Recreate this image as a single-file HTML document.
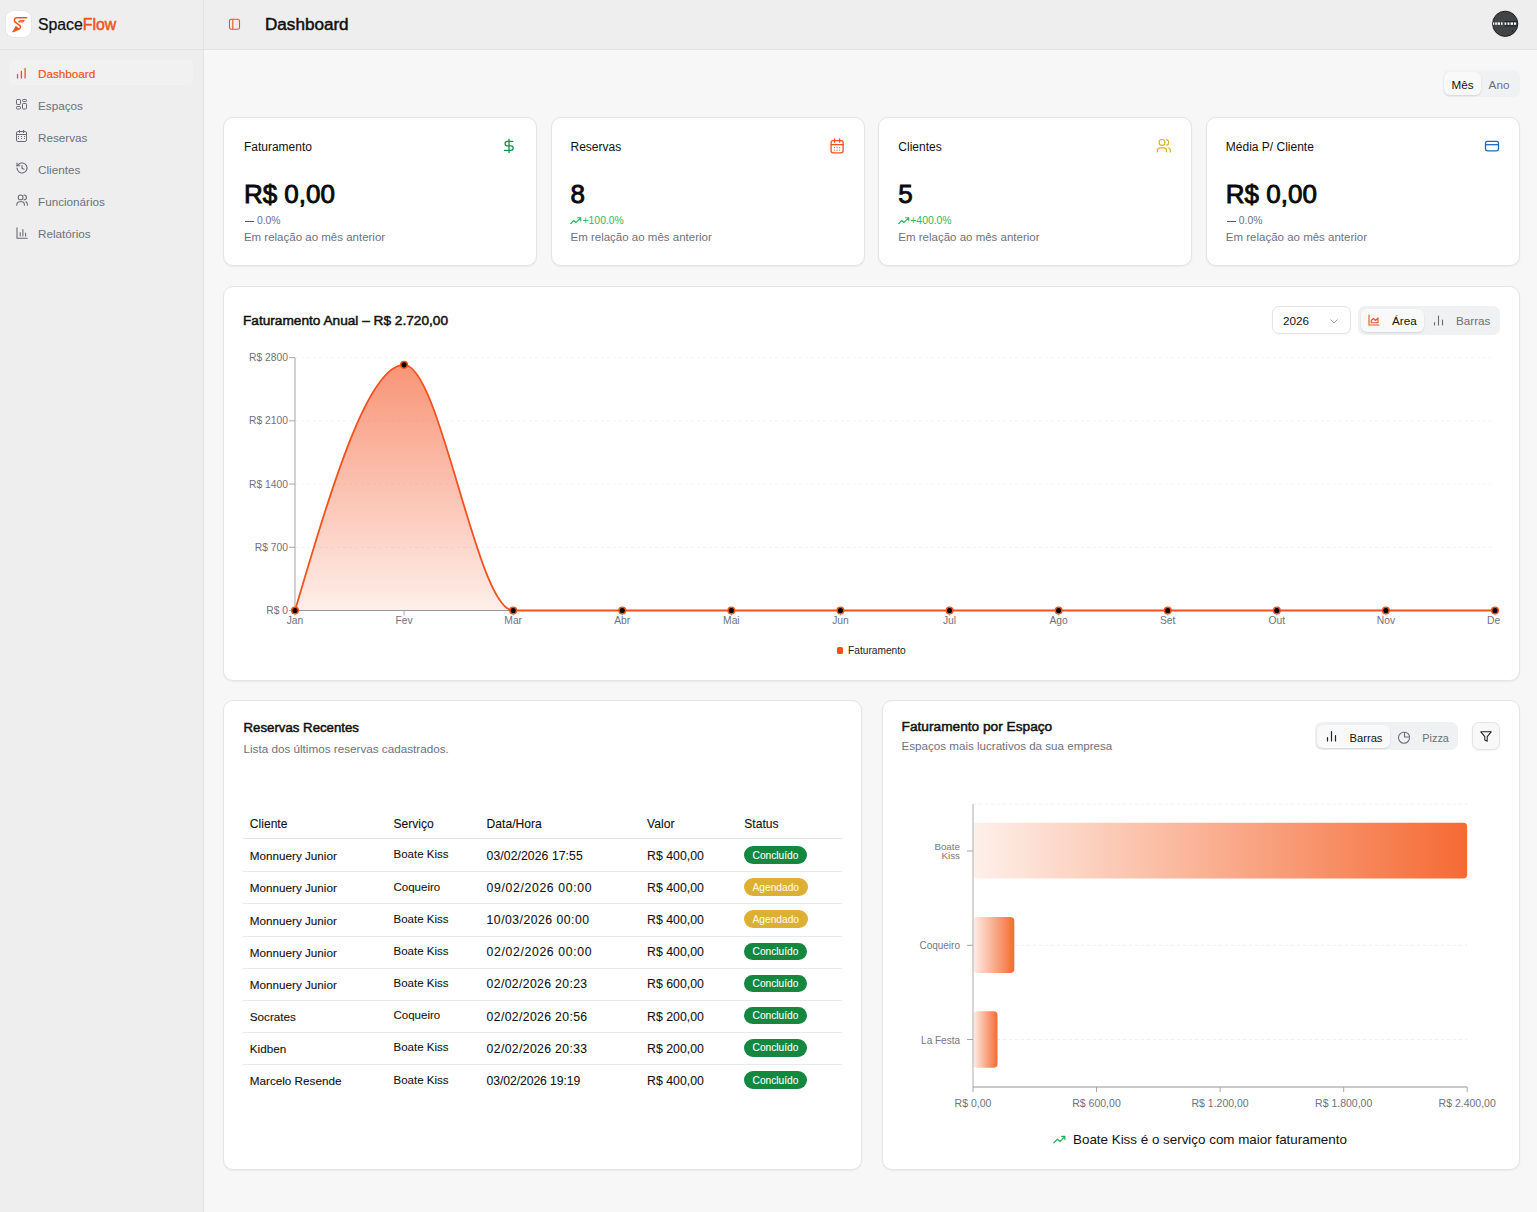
<!DOCTYPE html>
<html><head><meta charset="utf-8"><style>
html,body{margin:0;padding:0;width:1537px;height:1212px;overflow:hidden;background:#f7f7f7;}
body{position:relative;font-family:"Liberation Sans", sans-serif;}
.t{position:absolute;white-space:nowrap;}
svg{overflow:visible;}
</style></head><body>
<div style="position:absolute;left:0px;top:0px;width:203px;height:1212px;background:#eeeeee;"></div>
<div style="position:absolute;left:203px;top:0px;width:1px;height:1212px;background:#e3e3e3;"></div>
<div style="position:absolute;left:204px;top:0px;width:1333px;height:49px;background:#eeeeee;"></div>
<div style="position:absolute;left:0px;top:49px;width:1537px;height:1px;background:#e3e3e3;"></div>
<div style="position:absolute;left:204px;top:50px;width:1333px;height:1162px;background:#f7f7f7;"></div>
<div style="position:absolute;left:5.5px;top:11.2px;width:25.5px;height:25.5px;background:#fff;border-radius:8px;box-shadow:0 0 0 1px #e4e7eb;"></div>
<svg style="position:absolute;left:4px;top:9px;" width="28" height="29" viewBox="0 0 28 29"><g fill="none" stroke="#f4511e" stroke-width="1.5" stroke-linecap="round" stroke-linejoin="round"><path d="M22.6 8.8H12.6C10.2 8.8 9.6 12 11.6 13.4L15.6 16.3C17 17.4 16.6 19.2 15 20L9 22.6"/><path d="M14.6 12.6Q15 11.7 16.2 11.7H20.4L19.6 12.6Z" fill="#f4511e" stroke-width="1"/></g><path d="M8.4 23L11.8 16.8L15.2 19.6Z" fill="#f4511e"/></svg>
<div class="t" style="left:38px;top:16.63px;font-size:15.8px;line-height:15.8px;color:#111;font-weight:400;"><span style="-webkit-text-stroke:0.25px #111">Space</span><span style="color:#f4511e;-webkit-text-stroke:0.5px #f4511e">Flow</span></div>
<div style="position:absolute;left:9px;top:60px;width:184px;height:25px;background:#f1f1f1;border-radius:5px;"></div>
<div class="t" style="left:38px;top:68.10px;font-size:11.7px;line-height:11.7px;color:#f4511e;font-weight:400;-webkit-text-stroke:0.2px #f4511e;">Dashboard</div>
<div class="t" style="left:38px;top:100.10px;font-size:11.7px;line-height:11.7px;color:#6b7080;font-weight:400;">Espaços</div>
<div class="t" style="left:38px;top:132.10px;font-size:11.7px;line-height:11.7px;color:#6b7080;font-weight:400;">Reservas</div>
<div class="t" style="left:38px;top:164.10px;font-size:11.7px;line-height:11.7px;color:#6b7080;font-weight:400;">Clientes</div>
<div class="t" style="left:38px;top:196.10px;font-size:11.7px;line-height:11.7px;color:#6b7080;font-weight:400;">Funcionários</div>
<div class="t" style="left:38px;top:228.10px;font-size:11.7px;line-height:11.7px;color:#6b7080;font-weight:400;">Relatórios</div>
<svg style="position:absolute;left:15px;top:67.5px;" width="12" height="12" viewBox="0 0 12 12"><path d="M2.5 10V6.5M6.4 10V3.5M10.1 10V0.5" stroke="#f4511e" stroke-width="1.3" stroke-linecap="round" fill="none"/></svg>
<svg style="position:absolute;left:0px;top:0px;" width="40" height="260" viewBox="0 0 40 260"><g fill="none" stroke="#6b6b75" stroke-width="1"><rect x="16.5" y="99.5" width="4" height="5" rx="0.7"/><rect x="22.5" y="99.5" width="4" height="2" rx="0.7"/><rect x="22.5" y="103.5" width="4" height="5.5" rx="0.7"/><rect x="16.5" y="106.5" width="4" height="2.5" rx="0.7"/></g></svg>
<svg style="position:absolute;left:0px;top:0px;" width="40" height="260" viewBox="0 0 40 260"><g fill="none" stroke="#6b6b75" stroke-width="1"><rect x="16.5" y="131.5" width="10" height="10" rx="1.4"/><path d="M16.5 134.5H26.5M19.5 130V133M23.5 130V133"/></g><g fill="#6b6b75"><rect x="18" y="136" width="1" height="1"/><rect x="21" y="136" width="1" height="1"/><rect x="24" y="136" width="1" height="1"/><rect x="18" y="138" width="1" height="1"/><rect x="21" y="138" width="1" height="1"/><rect x="24" y="138" width="1" height="1"/></g></svg>
<svg style="position:absolute;left:15.5px;top:162.2px;" width="12" height="12" viewBox="0 0 12 12"><g fill="none" stroke="#6b6b75" stroke-width="1.1" stroke-linecap="round" stroke-linejoin="round"><path d="M1 6A5 5 0 1 0 2.6 2.3L1 3.8"/><path d="M1 1V3.8H3.8"/><path d="M6 3.5V6.2L8 7.2"/></g></svg>
<svg style="position:absolute;left:15.5px;top:194.4px;" width="12" height="12" viewBox="0 0 12 12"><g fill="none" stroke="#6b6b75" stroke-width="1.1" stroke-linecap="round"><circle cx="4.6" cy="3.4" r="2.4"/><path d="M0.8 11.2V10.5A2.8 2.8 0 0 1 3.6 7.7H5.6A2.8 2.8 0 0 1 8.4 10.5V11.2"/><path d="M8 1A2.4 2.4 0 0 1 8 5.8M9.9 7.8A2.8 2.8 0 0 1 11.4 10.5V11.2"/></g></svg>
<svg style="position:absolute;left:15.5px;top:226.5px;" width="12" height="12" viewBox="0 0 12 12"><g fill="none" stroke="#6b6b75" stroke-width="1.1" stroke-linecap="round"><path d="M1 0.8V11.2H11.2"/><path d="M4.2 9V5.5M6.9 9V2.5M9.6 9V6"/></g></svg>
<svg style="position:absolute;left:0px;top:0px;" width="260" height="49" viewBox="0 0 260 49"><g fill="none" stroke="#f4511e" stroke-width="1.1"><rect x="229.5" y="19.3" width="10" height="10" rx="1.8"/><path d="M232.8 19.3V29.3"/></g></svg>
<div class="t" style="left:265px;top:15.52px;font-size:17.1px;line-height:17.1px;color:#111;font-weight:400;-webkit-text-stroke:0.5px #111;">Dashboard</div>
<svg style="position:absolute;left:1490px;top:9px;" width="30" height="30" viewBox="0 0 30 30"><circle cx="15.2" cy="14.8" r="13.4" fill="none" stroke="#e3e4e8" stroke-width="1"/><circle cx="15.2" cy="14.8" r="12.6" fill="#404445" stroke="#16171c" stroke-width="0.9"/><g fill="#fff"><rect x="3" y="13.4" width="1.2" height="2.4"/><rect x="5.2" y="13.4" width="1.6" height="2.4"/><rect x="7.6" y="13.4" width="2.4" height="2.4"/><rect x="11" y="13.4" width="1.6" height="2.4"/><rect x="14.6" y="13.4" width="1.6" height="2.4"/><rect x="17.6" y="13.4" width="1.8" height="2.4"/><rect x="20.6" y="13.4" width="2.4" height="2.4"/><rect x="24" y="13.4" width="2" height="2.4"/></g><path d="M14.5 12.6H27.5M14.5 17H27.5" stroke="#15161a" stroke-width="0.8"/><circle cx="22.5" cy="22" r="0.7" fill="#15161a"/></svg>
<div style="position:absolute;left:1443px;top:70px;width:77px;height:27px;background:#f0f1f3;border-radius:7px;"></div>
<div style="position:absolute;left:1444px;top:72px;width:37px;height:23px;background:#f9f9fa;border-radius:6px;box-shadow:0 1px 2px rgba(0,0,0,.12);"></div>
<div class="t" style="left:1462.5px;transform:translateX(-50%);top:79.10px;font-size:11.7px;line-height:11.7px;color:#111;font-weight:400;">Mês</div>
<div class="t" style="left:1499px;transform:translateX(-50%);top:79.10px;font-size:11.7px;line-height:11.7px;color:#6b7080;font-weight:400;">Ano</div>
<div style="position:absolute;left:223px;top:117px;width:313.9px;height:149px;background:#fff;border-radius:10px;border:1px solid #e4e5e8;box-shadow:0 1px 2px rgba(0,0,0,.06);box-sizing:border-box;"></div>
<div class="t" style="left:243.9px;top:140.64px;font-size:12px;line-height:12px;color:#111;font-weight:400;">Faturamento</div>
<div class="t" style="left:243.9px;top:180.79px;font-size:26px;line-height:26px;color:#0a0a0a;font-weight:400;-webkit-text-stroke:0.9px #0a0a0a;">R$ 0,00</div>
<div style="position:absolute;left:244.9px;top:220.6px;width:9px;height:1.1px;background:#555a66;"></div>
<div class="t" style="left:256.9px;top:215.80px;font-size:10.4px;line-height:10.4px;color:#6e7280;font-weight:400;">0.0%</div>
<div class="t" style="left:243.9px;top:232.17px;font-size:11.5px;line-height:11.5px;color:#6e7280;font-weight:400;">Em relação ao mês anterior</div>
<div style="position:absolute;left:550.7px;top:117px;width:313.9px;height:149px;background:#fff;border-radius:10px;border:1px solid #e4e5e8;box-shadow:0 1px 2px rgba(0,0,0,.06);box-sizing:border-box;"></div>
<div class="t" style="left:570.5px;top:140.64px;font-size:12px;line-height:12px;color:#111;font-weight:400;">Reservas</div>
<div class="t" style="left:570.5px;top:180.79px;font-size:26px;line-height:26px;color:#0a0a0a;font-weight:400;-webkit-text-stroke:0.9px #0a0a0a;">8</div>
<svg style="position:absolute;left:570.0px;top:217.2px;" width="12" height="8" viewBox="0 0 12 8"><path d="M0.8 6.5L3.8 3.5L5.8 5.5L10.8 0.8M7.6 0.8H10.8V4" fill="none" stroke="#2bb964" stroke-width="1.1" stroke-linecap="round" stroke-linejoin="round"/></svg>
<div class="t" style="left:582.5px;top:215.80px;font-size:10.4px;line-height:10.4px;color:#2bb964;font-weight:400;">+100.0%</div>
<div class="t" style="left:570.5px;top:232.17px;font-size:11.5px;line-height:11.5px;color:#6e7280;font-weight:400;">Em relação ao mês anterior</div>
<div style="position:absolute;left:878.4px;top:117px;width:313.9px;height:149px;background:#fff;border-radius:10px;border:1px solid #e4e5e8;box-shadow:0 1px 2px rgba(0,0,0,.06);box-sizing:border-box;"></div>
<div class="t" style="left:898.3px;top:140.64px;font-size:12px;line-height:12px;color:#111;font-weight:400;">Clientes</div>
<div class="t" style="left:898.3px;top:180.79px;font-size:26px;line-height:26px;color:#0a0a0a;font-weight:400;-webkit-text-stroke:0.9px #0a0a0a;">5</div>
<svg style="position:absolute;left:897.8px;top:217.2px;" width="12" height="8" viewBox="0 0 12 8"><path d="M0.8 6.5L3.8 3.5L5.8 5.5L10.8 0.8M7.6 0.8H10.8V4" fill="none" stroke="#2bb964" stroke-width="1.1" stroke-linecap="round" stroke-linejoin="round"/></svg>
<div class="t" style="left:910.3px;top:215.80px;font-size:10.4px;line-height:10.4px;color:#2bb964;font-weight:400;">+400.0%</div>
<div class="t" style="left:898.3px;top:232.17px;font-size:11.5px;line-height:11.5px;color:#6e7280;font-weight:400;">Em relação ao mês anterior</div>
<div style="position:absolute;left:1206.1px;top:117px;width:313.9px;height:149px;background:#fff;border-radius:10px;border:1px solid #e4e5e8;box-shadow:0 1px 2px rgba(0,0,0,.06);box-sizing:border-box;"></div>
<div class="t" style="left:1225.8px;top:140.64px;font-size:12px;line-height:12px;color:#111;font-weight:400;">Média P/ Cliente</div>
<div class="t" style="left:1225.8px;top:180.79px;font-size:26px;line-height:26px;color:#0a0a0a;font-weight:400;-webkit-text-stroke:0.9px #0a0a0a;">R$ 0,00</div>
<div style="position:absolute;left:1226.8px;top:220.6px;width:9px;height:1.1px;background:#555a66;"></div>
<div class="t" style="left:1238.8px;top:215.80px;font-size:10.4px;line-height:10.4px;color:#6e7280;font-weight:400;">0.0%</div>
<div class="t" style="left:1225.8px;top:232.17px;font-size:11.5px;line-height:11.5px;color:#6e7280;font-weight:400;">Em relação ao mês anterior</div>
<svg style="position:absolute;left:0;top:0" width="1537" height="300" viewBox="0 0 1537 300"><path d="M509 139.2V152.6M512.6 141.4H507.3A2.2 2.2 0 0 0 507.3 145.8H510.9A2.3 2.3 0 0 1 510.9 150.4H504.6" fill="none" stroke="#17924a" stroke-width="1.35" stroke-linecap="round"/><g fill="none" stroke="#f4511e" stroke-width="1.3" stroke-linecap="round"><rect x="831.1" y="140.6" width="12" height="12.2" rx="2"/><path d="M831.1 144.6H843.1M834.6 139V142.2M839.6 139V142.2"/></g><g fill="#f4511e"><circle cx="834.5" cy="147.6" r=".6"/><circle cx="837.1" cy="147.6" r=".6"/><circle cx="839.7" cy="147.6" r=".6"/><circle cx="834.5" cy="150.1" r=".6"/><circle cx="837.1" cy="150.1" r=".6"/><circle cx="839.7" cy="150.1" r=".6"/></g><g fill="none" stroke="#dcae2c" stroke-width="1.2" stroke-linecap="round"><circle cx="1162" cy="142.4" r="2.9"/><path d="M1157.3 152V150.8A3 3 0 0 1 1160.3 147.8H1163.6A3 3 0 0 1 1166.6 150.8V152"/><path d="M1166.6 139.6A2.9 2.9 0 0 1 1166.6 145.2M1168.8 147.9A3 3 0 0 1 1170.4 150.8V152"/></g><g fill="none" stroke="#1a6bc0" stroke-width="1.3"><rect x="1485.5" y="141.4" width="13" height="9.4" rx="1.8"/><path d="M1485.5 144.7H1498.5"/></g></svg>
<div style="position:absolute;left:223px;top:286px;width:1297px;height:395px;background:#fff;border-radius:10px;border:1px solid #e4e5e8;box-shadow:0 1px 2px rgba(0,0,0,.06);box-sizing:border-box;"></div>
<div class="t" style="left:243px;top:313.84px;font-size:13.66px;line-height:13.66px;color:#111;font-weight:400;-webkit-text-stroke:0.5px #111;">Faturamento Anual – R$ 2.720,00</div>
<div style="position:absolute;left:1272px;top:306px;width:79px;height:28px;background:#fff;border:1px solid #e3e4e8;border-radius:7px;box-sizing:border-box;box-shadow:0 1px 2px rgba(0,0,0,.04);"></div>
<div class="t" style="left:1283px;top:315.10px;font-size:11.7px;line-height:11.7px;color:#111;font-weight:400;">2026</div>
<svg style="position:absolute;left:1330px;top:318.5px;" width="8" height="5" viewBox="0 0 8 5"><path d="M0.5 0.5L4 4L7.5 0.5" fill="none" stroke="#9a9ca3" stroke-width="1"/></svg>
<div style="position:absolute;left:1358px;top:306px;width:142px;height:29px;background:#f0f1f3;border-radius:7px;"></div>
<div style="position:absolute;left:1361px;top:309px;width:63px;height:23px;background:#f9f9fa;border-radius:6px;box-shadow:0 1px 2px rgba(0,0,0,.12);"></div>
<svg style="position:absolute;left:1368px;top:314px;" width="12" height="12" viewBox="0 0 12 12"><g fill="none" stroke="#f4511e" stroke-width="1.1" stroke-linecap="round" stroke-linejoin="round"><path d="M1 1V11H11"/><path d="M3.2 8.8V6.5L5.5 4.5L7.5 6.5L10 4V8.8Z"/></g></svg>
<div class="t" style="left:1392px;top:315.10px;font-size:11.7px;line-height:11.7px;color:#111;font-weight:400;">Área</div>
<svg style="position:absolute;left:1433px;top:314px;" width="11" height="12" viewBox="0 0 11 12"><g fill="none" stroke="#6b6b75" stroke-width="1.1" stroke-linecap="round"><path d="M1.5 11V8.5M5.5 11V2M9.5 11V6"/></g></svg>
<div class="t" style="left:1456px;top:315.10px;font-size:11.7px;line-height:11.7px;color:#6b7080;font-weight:400;">Barras</div>
<svg style="position:absolute;left:0;top:0;" width="1500" height="700" viewBox="0 0 1500 700"><line x1="295" y1="357.60" x2="1493" y2="357.60" stroke="#f0f0f2" stroke-width="0.8" stroke-dasharray="3 3"/><line x1="295" y1="420.83" x2="1493" y2="420.83" stroke="#f0f0f2" stroke-width="0.8" stroke-dasharray="3 3"/><line x1="295" y1="484.05" x2="1493" y2="484.05" stroke="#f0f0f2" stroke-width="0.8" stroke-dasharray="3 3"/><line x1="295" y1="547.27" x2="1493" y2="547.27" stroke="#f0f0f2" stroke-width="0.8" stroke-dasharray="3 3"/><line x1="295" y1="610.50" x2="1493" y2="610.50" stroke="#f0f0f2" stroke-width="0.8" stroke-dasharray="3 3"/><defs><linearGradient id="ag" x1="0" y1="0" x2="0" y2="1"><stop offset="0%" stop-color="#f5592a" stop-opacity="0.64"/><stop offset="100%" stop-color="#f5592a" stop-opacity="0.1"/></linearGradient><linearGradient id="bg1" x1="0" y1="0" x2="1" y2="0"><stop offset="0%" stop-color="#f4511e" stop-opacity="0.08"/><stop offset="100%" stop-color="#f4511e" stop-opacity="0.85"/></linearGradient><clipPath id="cc"><rect x="0" y="0" width="1500" height="700"/></clipPath></defs><path d="M295.00,610.50 C331.36,487.66 367.73,364.83 404.09,364.83 C440.45,364.83 476.82,610.50 513.18,610.50 C549.55,610.50 585.91,610.50 622.27,610.50 C658.64,610.50 695.00,610.50 731.36,610.50 C767.73,610.50 804.09,610.50 840.45,610.50 C876.82,610.50 913.18,610.50 949.55,610.50 C985.91,610.50 1022.27,610.50 1058.64,610.50 C1095.00,610.50 1131.36,610.50 1167.73,610.50 C1204.09,610.50 1240.45,610.50 1276.82,610.50 C1313.18,610.50 1349.55,610.50 1385.91,610.50 C1422.27,610.50 1458.64,610.50 1495.00,610.50 L1495,610.5 L295,610.5 Z" fill="url(#ag)" stroke="none"/><line x1="295" y1="357.6" x2="295" y2="610.5" stroke="#b4b5ba" stroke-width="1.2"/><line x1="295" y1="610.5" x2="1495" y2="610.5" stroke="#98989c" stroke-width="1.1"/><line x1="289" y1="357.60" x2="295" y2="357.60" stroke="#a8a8ac" stroke-width="1"/><line x1="289" y1="420.83" x2="295" y2="420.83" stroke="#a8a8ac" stroke-width="1"/><line x1="289" y1="484.05" x2="295" y2="484.05" stroke="#a8a8ac" stroke-width="1"/><line x1="289" y1="547.27" x2="295" y2="547.27" stroke="#a8a8ac" stroke-width="1"/><line x1="289" y1="610.50" x2="295" y2="610.50" stroke="#a8a8ac" stroke-width="1"/><line x1="295.00" y1="610.5" x2="295.00" y2="615.5" stroke="#a8a8ac" stroke-width="1"/><line x1="404.09" y1="610.5" x2="404.09" y2="615.5" stroke="#a8a8ac" stroke-width="1"/><line x1="513.18" y1="610.5" x2="513.18" y2="615.5" stroke="#a8a8ac" stroke-width="1"/><line x1="622.27" y1="610.5" x2="622.27" y2="615.5" stroke="#a8a8ac" stroke-width="1"/><line x1="731.36" y1="610.5" x2="731.36" y2="615.5" stroke="#a8a8ac" stroke-width="1"/><line x1="840.45" y1="610.5" x2="840.45" y2="615.5" stroke="#a8a8ac" stroke-width="1"/><line x1="949.55" y1="610.5" x2="949.55" y2="615.5" stroke="#a8a8ac" stroke-width="1"/><line x1="1058.64" y1="610.5" x2="1058.64" y2="615.5" stroke="#a8a8ac" stroke-width="1"/><line x1="1167.73" y1="610.5" x2="1167.73" y2="615.5" stroke="#a8a8ac" stroke-width="1"/><line x1="1276.82" y1="610.5" x2="1276.82" y2="615.5" stroke="#a8a8ac" stroke-width="1"/><line x1="1385.91" y1="610.5" x2="1385.91" y2="615.5" stroke="#a8a8ac" stroke-width="1"/><line x1="1495.00" y1="610.5" x2="1495.00" y2="615.5" stroke="#a8a8ac" stroke-width="1"/><path d="M295.00,610.50 C331.36,487.66 367.73,364.83 404.09,364.83 C440.45,364.83 476.82,610.50 513.18,610.50 C549.55,610.50 585.91,610.50 622.27,610.50 C658.64,610.50 695.00,610.50 731.36,610.50 C767.73,610.50 804.09,610.50 840.45,610.50 C876.82,610.50 913.18,610.50 949.55,610.50 C985.91,610.50 1022.27,610.50 1058.64,610.50 C1095.00,610.50 1131.36,610.50 1167.73,610.50 C1204.09,610.50 1240.45,610.50 1276.82,610.50 C1313.18,610.50 1349.55,610.50 1385.91,610.50 C1422.27,610.50 1458.64,610.50 1495.00,610.50" fill="none" stroke="#f4511e" stroke-width="1.8"/><circle cx="295.00" cy="610.50" r="3.3" fill="#000" stroke="#f4511e" stroke-width="1.5"/><circle cx="404.09" cy="364.83" r="3.3" fill="#000" stroke="#f4511e" stroke-width="1.5"/><circle cx="513.18" cy="610.50" r="3.3" fill="#000" stroke="#f4511e" stroke-width="1.5"/><circle cx="622.27" cy="610.50" r="3.3" fill="#000" stroke="#f4511e" stroke-width="1.5"/><circle cx="731.36" cy="610.50" r="3.3" fill="#000" stroke="#f4511e" stroke-width="1.5"/><circle cx="840.45" cy="610.50" r="3.3" fill="#000" stroke="#f4511e" stroke-width="1.5"/><circle cx="949.55" cy="610.50" r="3.3" fill="#000" stroke="#f4511e" stroke-width="1.5"/><circle cx="1058.64" cy="610.50" r="3.3" fill="#000" stroke="#f4511e" stroke-width="1.5"/><circle cx="1167.73" cy="610.50" r="3.3" fill="#000" stroke="#f4511e" stroke-width="1.5"/><circle cx="1276.82" cy="610.50" r="3.3" fill="#000" stroke="#f4511e" stroke-width="1.5"/><circle cx="1385.91" cy="610.50" r="3.3" fill="#000" stroke="#f4511e" stroke-width="1.5"/><circle cx="1495.00" cy="610.50" r="3.3" fill="#000" stroke="#f4511e" stroke-width="1.5"/></svg>
<div class="t" style="right:1249px;top:353.18px;font-size:10.3px;line-height:10.3px;color:#6e7280;font-weight:400;">R$ 2800</div>
<div class="t" style="right:1249px;top:416.41px;font-size:10.3px;line-height:10.3px;color:#6e7280;font-weight:400;">R$ 2100</div>
<div class="t" style="right:1249px;top:479.63px;font-size:10.3px;line-height:10.3px;color:#6e7280;font-weight:400;">R$ 1400</div>
<div class="t" style="right:1249px;top:542.86px;font-size:10.3px;line-height:10.3px;color:#6e7280;font-weight:400;">R$ 700</div>
<div class="t" style="right:1249px;top:606.08px;font-size:10.3px;line-height:10.3px;color:#6e7280;font-weight:400;">R$ 0</div>
<div class="t" style="left:295.0px;transform:translateX(-50%);top:616.08px;font-size:10.3px;line-height:10.3px;color:#6e7280;font-weight:400;">Jan</div>
<div class="t" style="left:404.09px;transform:translateX(-50%);top:616.08px;font-size:10.3px;line-height:10.3px;color:#6e7280;font-weight:400;">Fev</div>
<div class="t" style="left:513.18px;transform:translateX(-50%);top:616.08px;font-size:10.3px;line-height:10.3px;color:#6e7280;font-weight:400;">Mar</div>
<div class="t" style="left:622.27px;transform:translateX(-50%);top:616.08px;font-size:10.3px;line-height:10.3px;color:#6e7280;font-weight:400;">Abr</div>
<div class="t" style="left:731.36px;transform:translateX(-50%);top:616.08px;font-size:10.3px;line-height:10.3px;color:#6e7280;font-weight:400;">Mai</div>
<div class="t" style="left:840.45px;transform:translateX(-50%);top:616.08px;font-size:10.3px;line-height:10.3px;color:#6e7280;font-weight:400;">Jun</div>
<div class="t" style="left:949.55px;transform:translateX(-50%);top:616.08px;font-size:10.3px;line-height:10.3px;color:#6e7280;font-weight:400;">Jul</div>
<div class="t" style="left:1058.64px;transform:translateX(-50%);top:616.08px;font-size:10.3px;line-height:10.3px;color:#6e7280;font-weight:400;">Ago</div>
<div class="t" style="left:1167.73px;transform:translateX(-50%);top:616.08px;font-size:10.3px;line-height:10.3px;color:#6e7280;font-weight:400;">Set</div>
<div class="t" style="left:1276.82px;transform:translateX(-50%);top:616.08px;font-size:10.3px;line-height:10.3px;color:#6e7280;font-weight:400;">Out</div>
<div class="t" style="left:1385.91px;transform:translateX(-50%);top:616.08px;font-size:10.3px;line-height:10.3px;color:#6e7280;font-weight:400;">Nov</div>
<div class="t" style="left:1487px;top:616.08px;font-size:10.3px;line-height:10.3px;color:#6e7280;font-weight:400;">De</div>
<div style="position:absolute;left:837px;top:647px;width:6px;height:7px;background:#f4511e;border-radius:1.5px;"></div>
<div class="t" style="left:848px;top:646.17px;font-size:10.2px;line-height:10.2px;color:#222;font-weight:400;">Faturamento</div>
<div style="position:absolute;left:223px;top:700px;width:639px;height:470px;background:#fff;border-radius:10px;border:1px solid #e4e5e8;box-shadow:0 1px 2px rgba(0,0,0,.06);box-sizing:border-box;"></div>
<div class="t" style="left:243.5px;top:720.99px;font-size:13.24px;line-height:13.24px;color:#111;font-weight:400;-webkit-text-stroke:0.5px #111;">Reservas Recentes</div>
<div class="t" style="left:243.5px;top:742.60px;font-size:11.7px;line-height:11.7px;color:#6e7280;font-weight:400;">Lista dos últimos reservas cadastrados.</div>
<div class="t" style="left:249.8px;top:818.16px;font-size:12.1px;line-height:12.1px;color:#111;font-weight:400;-webkit-text-stroke:0.1px #111;">Cliente</div>
<div class="t" style="left:393.5px;top:818.16px;font-size:12.1px;line-height:12.1px;color:#111;font-weight:400;-webkit-text-stroke:0.1px #111;">Serviço</div>
<div class="t" style="left:486.6px;top:818.16px;font-size:12.1px;line-height:12.1px;color:#111;font-weight:400;-webkit-text-stroke:0.1px #111;">Data/Hora</div>
<div class="t" style="left:647.1px;top:818.16px;font-size:12.1px;line-height:12.1px;color:#111;font-weight:400;-webkit-text-stroke:0.1px #111;">Valor</div>
<div class="t" style="left:744.3px;top:818.16px;font-size:12.1px;line-height:12.1px;color:#111;font-weight:400;-webkit-text-stroke:0.1px #111;">Status</div>
<div style="position:absolute;left:243px;top:838px;width:599px;height:1px;background:#e6e6e9;"></div>
<div class="t" style="left:249.8px;top:850.30px;font-size:11.7px;line-height:11.7px;color:#111;font-weight:400;-webkit-text-stroke:0.1px #111;">Monnuery Junior</div>
<div class="t" style="left:393.5px;top:849.47px;font-size:11.5px;line-height:11.5px;color:#111;font-weight:400;-webkit-text-stroke:0.08px #111;">Boate Kiss</div>
<div class="t" style="left:486.6px;top:849.87px;font-size:12.2px;line-height:12.2px;color:#111;font-weight:400;letter-spacing:0.082px;-webkit-text-stroke:0.08px #111;">03/02/2026 17:55</div>
<div class="t" style="left:647.1px;top:849.79px;font-size:12.3px;line-height:12.3px;color:#111;font-weight:400;-webkit-text-stroke:0.08px #111;">R$ 400,00</div>
<div style="position:absolute;left:743.9px;top:846.1px;width:63.3px;height:17.6px;background:#15883f;border-radius:9px;"></div>
<div class="t" style="left:775.5px;transform:translateX(-50%);top:850.57px;font-size:10.2px;line-height:10.2px;color:#fff;font-weight:400;-webkit-text-stroke:0.08px #fff;">Concluído</div>
<div style="position:absolute;left:243px;top:871.3px;width:599px;height:1px;background:#e9e9ec;"></div>
<div class="t" style="left:249.8px;top:882.45px;font-size:11.7px;line-height:11.7px;color:#111;font-weight:400;-webkit-text-stroke:0.1px #111;">Monnuery Junior</div>
<div class="t" style="left:393.5px;top:881.62px;font-size:11.5px;line-height:11.5px;color:#111;font-weight:400;-webkit-text-stroke:0.08px #111;">Coqueiro</div>
<div class="t" style="left:486.6px;top:882.02px;font-size:12.2px;line-height:12.2px;color:#111;font-weight:400;letter-spacing:0.669px;-webkit-text-stroke:0.08px #111;">09/02/2026 00:00</div>
<div class="t" style="left:647.1px;top:881.94px;font-size:12.3px;line-height:12.3px;color:#111;font-weight:400;-webkit-text-stroke:0.08px #111;">R$ 400,00</div>
<div style="position:absolute;left:743.9px;top:878.25px;width:63.8px;height:17.6px;background:#ddb033;border-radius:9px;"></div>
<div class="t" style="left:775.8px;transform:translateX(-50%);top:882.72px;font-size:10.2px;line-height:10.2px;color:#fff8e6;font-weight:400;-webkit-text-stroke:0.08px #fff8e6;">Agendado</div>
<div style="position:absolute;left:243px;top:903.4499999999999px;width:599px;height:1px;background:#e9e9ec;"></div>
<div class="t" style="left:249.8px;top:914.60px;font-size:11.7px;line-height:11.7px;color:#111;font-weight:400;-webkit-text-stroke:0.1px #111;">Monnuery Junior</div>
<div class="t" style="left:393.5px;top:913.77px;font-size:11.5px;line-height:11.5px;color:#111;font-weight:400;-webkit-text-stroke:0.08px #111;">Boate Kiss</div>
<div class="t" style="left:486.6px;top:914.17px;font-size:12.2px;line-height:12.2px;color:#111;font-weight:400;letter-spacing:0.502px;-webkit-text-stroke:0.08px #111;">10/03/2026 00:00</div>
<div class="t" style="left:647.1px;top:914.09px;font-size:12.3px;line-height:12.3px;color:#111;font-weight:400;-webkit-text-stroke:0.08px #111;">R$ 400,00</div>
<div style="position:absolute;left:743.9px;top:910.4px;width:63.8px;height:17.6px;background:#ddb033;border-radius:9px;"></div>
<div class="t" style="left:775.8px;transform:translateX(-50%);top:914.87px;font-size:10.2px;line-height:10.2px;color:#fff8e6;font-weight:400;-webkit-text-stroke:0.08px #fff8e6;">Agendado</div>
<div style="position:absolute;left:243px;top:935.5999999999999px;width:599px;height:1px;background:#e9e9ec;"></div>
<div class="t" style="left:249.8px;top:946.75px;font-size:11.7px;line-height:11.7px;color:#111;font-weight:400;-webkit-text-stroke:0.1px #111;">Monnuery Junior</div>
<div class="t" style="left:393.5px;top:945.92px;font-size:11.5px;line-height:11.5px;color:#111;font-weight:400;-webkit-text-stroke:0.08px #111;">Boate Kiss</div>
<div class="t" style="left:486.6px;top:946.32px;font-size:12.2px;line-height:12.2px;color:#111;font-weight:400;letter-spacing:0.669px;-webkit-text-stroke:0.08px #111;">02/02/2026 00:00</div>
<div class="t" style="left:647.1px;top:946.24px;font-size:12.3px;line-height:12.3px;color:#111;font-weight:400;-webkit-text-stroke:0.08px #111;">R$ 400,00</div>
<div style="position:absolute;left:743.9px;top:942.55px;width:63.3px;height:17.6px;background:#15883f;border-radius:9px;"></div>
<div class="t" style="left:775.5px;transform:translateX(-50%);top:947.02px;font-size:10.2px;line-height:10.2px;color:#fff;font-weight:400;-webkit-text-stroke:0.08px #fff;">Concluído</div>
<div style="position:absolute;left:243px;top:967.75px;width:599px;height:1px;background:#e9e9ec;"></div>
<div class="t" style="left:249.8px;top:978.90px;font-size:11.7px;line-height:11.7px;color:#111;font-weight:400;-webkit-text-stroke:0.1px #111;">Monnuery Junior</div>
<div class="t" style="left:393.5px;top:978.07px;font-size:11.5px;line-height:11.5px;color:#111;font-weight:400;-webkit-text-stroke:0.08px #111;">Boate Kiss</div>
<div class="t" style="left:486.6px;top:978.47px;font-size:12.2px;line-height:12.2px;color:#111;font-weight:400;letter-spacing:0.376px;-webkit-text-stroke:0.08px #111;">02/02/2026 20:23</div>
<div class="t" style="left:647.1px;top:978.39px;font-size:12.3px;line-height:12.3px;color:#111;font-weight:400;-webkit-text-stroke:0.08px #111;">R$ 600,00</div>
<div style="position:absolute;left:743.9px;top:974.7px;width:63.3px;height:17.6px;background:#15883f;border-radius:9px;"></div>
<div class="t" style="left:775.5px;transform:translateX(-50%);top:979.17px;font-size:10.2px;line-height:10.2px;color:#fff;font-weight:400;-webkit-text-stroke:0.08px #fff;">Concluído</div>
<div style="position:absolute;left:243px;top:999.9px;width:599px;height:1px;background:#e9e9ec;"></div>
<div class="t" style="left:249.8px;top:1011.05px;font-size:11.7px;line-height:11.7px;color:#111;font-weight:400;-webkit-text-stroke:0.1px #111;">Socrates</div>
<div class="t" style="left:393.5px;top:1010.22px;font-size:11.5px;line-height:11.5px;color:#111;font-weight:400;-webkit-text-stroke:0.08px #111;">Coqueiro</div>
<div class="t" style="left:486.6px;top:1010.62px;font-size:12.2px;line-height:12.2px;color:#111;font-weight:400;letter-spacing:0.376px;-webkit-text-stroke:0.08px #111;">02/02/2026 20:56</div>
<div class="t" style="left:647.1px;top:1010.54px;font-size:12.3px;line-height:12.3px;color:#111;font-weight:400;-webkit-text-stroke:0.08px #111;">R$ 200,00</div>
<div style="position:absolute;left:743.9px;top:1006.85px;width:63.3px;height:17.6px;background:#15883f;border-radius:9px;"></div>
<div class="t" style="left:775.5px;transform:translateX(-50%);top:1011.32px;font-size:10.2px;line-height:10.2px;color:#fff;font-weight:400;-webkit-text-stroke:0.08px #fff;">Concluído</div>
<div style="position:absolute;left:243px;top:1032.05px;width:599px;height:1px;background:#e9e9ec;"></div>
<div class="t" style="left:249.8px;top:1043.20px;font-size:11.7px;line-height:11.7px;color:#111;font-weight:400;-webkit-text-stroke:0.1px #111;">Kidben</div>
<div class="t" style="left:393.5px;top:1042.37px;font-size:11.5px;line-height:11.5px;color:#111;font-weight:400;-webkit-text-stroke:0.08px #111;">Boate Kiss</div>
<div class="t" style="left:486.6px;top:1042.77px;font-size:12.2px;line-height:12.2px;color:#111;font-weight:400;letter-spacing:0.376px;-webkit-text-stroke:0.08px #111;">02/02/2026 20:33</div>
<div class="t" style="left:647.1px;top:1042.69px;font-size:12.3px;line-height:12.3px;color:#111;font-weight:400;-webkit-text-stroke:0.08px #111;">R$ 200,00</div>
<div style="position:absolute;left:743.9px;top:1039.0px;width:63.3px;height:17.6px;background:#15883f;border-radius:9px;"></div>
<div class="t" style="left:775.5px;transform:translateX(-50%);top:1043.47px;font-size:10.2px;line-height:10.2px;color:#fff;font-weight:400;-webkit-text-stroke:0.08px #fff;">Concluído</div>
<div style="position:absolute;left:243px;top:1064.1999999999998px;width:599px;height:1px;background:#e9e9ec;"></div>
<div class="t" style="left:249.8px;top:1075.35px;font-size:11.7px;line-height:11.7px;color:#111;font-weight:400;-webkit-text-stroke:0.1px #111;">Marcelo Resende</div>
<div class="t" style="left:393.5px;top:1074.52px;font-size:11.5px;line-height:11.5px;color:#111;font-weight:400;-webkit-text-stroke:0.08px #111;">Boate Kiss</div>
<div class="t" style="left:486.6px;top:1074.92px;font-size:12.2px;line-height:12.2px;color:#111;font-weight:400;letter-spacing:-0.078px;-webkit-text-stroke:0.08px #111;">03/02/2026 19:19</div>
<div class="t" style="left:647.1px;top:1074.84px;font-size:12.3px;line-height:12.3px;color:#111;font-weight:400;-webkit-text-stroke:0.08px #111;">R$ 400,00</div>
<div style="position:absolute;left:743.9px;top:1071.15px;width:63.3px;height:17.6px;background:#15883f;border-radius:9px;"></div>
<div class="t" style="left:775.5px;transform:translateX(-50%);top:1075.62px;font-size:10.2px;line-height:10.2px;color:#fff;font-weight:400;-webkit-text-stroke:0.08px #fff;">Concluído</div>
<div style="position:absolute;left:881.5px;top:700px;width:638.5px;height:470px;background:#fff;border-radius:10px;border:1px solid #e4e5e8;box-shadow:0 1px 2px rgba(0,0,0,.06);box-sizing:border-box;"></div>
<div class="t" style="left:901.6px;top:720.30px;font-size:13.7px;line-height:13.7px;color:#111;font-weight:400;-webkit-text-stroke:0.5px #111;">Faturamento por Espaço</div>
<div class="t" style="left:901.6px;top:739.98px;font-size:11.6px;line-height:11.6px;color:#6e7280;font-weight:400;">Espaços mais lucrativos da sua empresa</div>
<div style="position:absolute;left:1315.3px;top:722.2px;width:142.5px;height:28.3px;background:#f0f1f3;border-radius:7px;"></div>
<div style="position:absolute;left:1317px;top:725px;width:72.9px;height:23.2px;background:#f9f9fa;border-radius:6px;box-shadow:0 1px 2px rgba(0,0,0,.12);"></div>
<svg style="position:absolute;left:1326px;top:730px;" width="11" height="12" viewBox="0 0 11 12"><g fill="none" stroke="#222" stroke-width="1.2" stroke-linecap="round"><path d="M1.5 11V7.5M5.5 11V1.5M9.5 11V5.5"/></g></svg>
<div class="t" style="left:1349.5px;top:732.72px;font-size:11.2px;line-height:11.2px;color:#111;font-weight:400;">Barras</div>
<svg style="position:absolute;left:1398px;top:730.5px;" width="13" height="13" viewBox="0 0 13 13"><g fill="none" stroke="#6b6b75" stroke-width="1.1" stroke-linecap="round" stroke-linejoin="round"><path d="M11.5 7A5.5 5.5 0 1 1 5.5 1.3"/><path d="M6.5 1.2A5 5 0 0 1 11.6 6H6.5Z"/></g></svg>
<div class="t" style="left:1422.3px;top:732.97px;font-size:10.9px;line-height:10.9px;color:#6b7080;font-weight:400;">Pizza</div>
<div style="position:absolute;left:1471.5px;top:722.2px;width:28px;height:28.3px;background:#f8f8f9;border:1px solid #e3e4e8;border-radius:7px;box-sizing:border-box;box-shadow:0 1px 2px rgba(0,0,0,.06);"></div>
<svg style="position:absolute;left:1479.5px;top:731px;" width="12" height="11" viewBox="0 0 12 11"><path d="M0.8 0.8H11.2L7.2 5.6V10.2L4.8 9V5.6Z" fill="none" stroke="#222" stroke-width="1.05" stroke-linejoin="round"/></svg>
<svg style="position:absolute;left:0;top:0;" width="1537" height="1212" viewBox="0 0 1537 1212"><defs><linearGradient id="hb" x1="0" y1="0" x2="1" y2="0"><stop offset="0%" stop-color="#fef0ea"/><stop offset="100%" stop-color="#f56a33"/></linearGradient></defs><line x1="973" y1="804.2" x2="1467.2" y2="804.2" stroke="#efeff2" stroke-dasharray="3 3"/><line x1="973" y1="851" x2="1467.2" y2="851" stroke="#efeff2" stroke-dasharray="3 3"/><line x1="973" y1="945.3" x2="1467.2" y2="945.3" stroke="#efeff2" stroke-dasharray="3 3"/><line x1="973" y1="1039.5" x2="1467.2" y2="1039.5" stroke="#efeff2" stroke-dasharray="3 3"/><rect x="973" y="822.7" width="494.2" height="55.8" rx="4" fill="url(#hb)"/><rect x="973" y="917.1" width="41.3" height="55.9" rx="4" fill="url(#hb)"/><rect x="973" y="1011.3" width="24.5" height="56.4" rx="4" fill="url(#hb)"/><line x1="973" y1="804.2" x2="973" y2="1087" stroke="#b9babe" stroke-width="1.2"/><line x1="973" y1="1087" x2="1467.2" y2="1087" stroke="#939397" stroke-width="1.1"/><line x1="967" y1="851" x2="973" y2="851" stroke="#a8a8ac"/><line x1="967" y1="945.3" x2="973" y2="945.3" stroke="#a8a8ac"/><line x1="967" y1="1039.5" x2="973" y2="1039.5" stroke="#a8a8ac"/><line x1="973.0" y1="1087" x2="973.0" y2="1092" stroke="#a8a8ac"/><line x1="1096.5" y1="1087" x2="1096.5" y2="1092" stroke="#a8a8ac"/><line x1="1220.1" y1="1087" x2="1220.1" y2="1092" stroke="#a8a8ac"/><line x1="1343.7" y1="1087" x2="1343.7" y2="1092" stroke="#a8a8ac"/><line x1="1467.2" y1="1087" x2="1467.2" y2="1092" stroke="#a8a8ac"/></svg>
<div class="t" style="right:577px;top:842.10px;font-size:9.8px;line-height:9.8px;color:#737784;font-weight:400;">Boate</div>
<div class="t" style="right:577px;top:851.10px;font-size:9.8px;line-height:9.8px;color:#737784;font-weight:400;">Kiss</div>
<div class="t" style="right:577px;top:941.33px;font-size:10px;line-height:10px;color:#737784;font-weight:400;">Coqueiro</div>
<div class="t" style="right:577px;top:1035.84px;font-size:10px;line-height:10px;color:#737784;font-weight:400;">La Festa</div>
<div class="t" style="left:973.0px;transform:translateX(-50%);top:1098.01px;font-size:10.5px;line-height:10.5px;color:#6e7280;font-weight:400;">R$ 0,00</div>
<div class="t" style="left:1096.5px;transform:translateX(-50%);top:1098.01px;font-size:10.5px;line-height:10.5px;color:#6e7280;font-weight:400;">R$ 600,00</div>
<div class="t" style="left:1220.1px;transform:translateX(-50%);top:1098.01px;font-size:10.5px;line-height:10.5px;color:#6e7280;font-weight:400;">R$ 1.200,00</div>
<div class="t" style="left:1343.7px;transform:translateX(-50%);top:1098.01px;font-size:10.5px;line-height:10.5px;color:#6e7280;font-weight:400;">R$ 1.800,00</div>
<div class="t" style="left:1467.2px;transform:translateX(-50%);top:1098.01px;font-size:10.5px;line-height:10.5px;color:#6e7280;font-weight:400;">R$ 2.400,00</div>
<svg style="position:absolute;left:1053px;top:1135px;" width="13" height="9" viewBox="0 0 13 9"><path d="M0.8 7.8L4.5 4.2L7 6.5L11.8 1.5M8.5 1.3H11.9V4.6" fill="none" stroke="#22b15a" stroke-width="1.2" stroke-linecap="round" stroke-linejoin="round"/></svg>
<div class="t" style="left:1073px;top:1132.96px;font-size:13.4px;line-height:13.4px;color:#111;font-weight:400;">Boate Kiss é o serviço com maior faturamento</div>
</body></html>
